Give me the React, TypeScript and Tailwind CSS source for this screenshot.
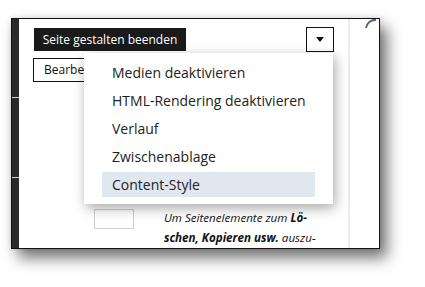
import React from "react";

const items = [
  "Medien deaktivieren",
  "HTML-Rendering deaktivieren",
  "Verlauf",
  "Zwischenablage",
  "Content-Style",
];

export default function App() {
  return (
    <div
      className="w-[425px] h-[287px] bg-white overflow-hidden pt-[18px] pl-[11px]"
      style={{ fontFamily: '"Open Sans", "Liberation Sans", sans-serif' }}
    >
      <div className="relative flex w-[369px] h-[231px] border border-[#111] bg-white shadow-[7px_9px_14px_rgba(0,0,0,0.55),0_0_6px_rgba(0,0,0,0.12)] overflow-hidden">
        {/* sidebar */}
        <div className="flex flex-col w-[7px] bg-[#2b2b2b] shrink-0">
          <div className="h-[78px]" />
          <div className="h-px bg-[#d0d0d0]" />
          <div className="h-[79px]" />
          <div className="h-px bg-[#d0d0d0]" />
        </div>
        {/* main */}
        <div className="flex flex-col w-[329px] pl-[15px] pr-[14px] pt-[9px] shrink-0">
          <div className="flex items-start justify-between">
            <div className="w-[152px] h-[23px] bg-[#1a1a1a] text-white text-[12px] leading-[23px] text-center whitespace-nowrap">
              Seite gestalten beenden
            </div>
            <div className="w-[28px] h-[25px] -mt-px border border-[#111] flex items-center justify-center">
              <svg width="8" height="5" viewBox="0 0 8 5">
                <path d="M0 0 L8 0 L4 5 Z" fill="#111" />
              </svg>
            </div>
          </div>
          <div className="mt-[6px] -ml-px w-[90px] h-[24px] border border-[#111] pl-[10px] text-[12px] leading-[22px] text-[#111] whitespace-nowrap">
            Bearbeiten
          </div>
          <div className="mt-[127px] ml-[60px] flex items-start">
            <div className="w-[40px] h-[20px] border border-[#cfcfcf] shrink-0" />
            <div className="ml-[30px] -mt-px text-[11.6px] leading-[20px] italic text-[#111] whitespace-nowrap">
              Um Seitenelemente zum <b>Lö-</b>
              <br />
              <b>schen, Kopieren usw.</b> auszu-
            </div>
          </div>
        </div>
        {/* right column */}
        <div className="w-[2px] bg-[#ececec] shrink-0" />
        <div className="flex-1 flex justify-end pr-px">
          <svg width="14" height="12" viewBox="0 0 14 12" className="-mt-px">
            <path d="M2 10 A 9 9 0 0 1 12 2" fill="none" stroke="#4e6682" strokeWidth="2" />
          </svg>
        </div>

        {/* dropdown menu */}
        <div className="absolute left-[72px] top-[34px] w-[249px] bg-white shadow-[2px_4px_12px_rgba(0,0,0,0.35)] px-[18px] py-[7px] flex flex-col gap-[3px]">
          {items.map((t, i) => (
            <div
              key={t}
              className={
                "h-[25px] pl-[10px] text-[14px] leading-[25px] text-[#222] whitespace-nowrap " +
                (i === 4 ? "bg-[#e1e7ef]" : "")
              }
            >
              {t}
            </div>
          ))}
        </div>
      </div>
    </div>
  );
}
